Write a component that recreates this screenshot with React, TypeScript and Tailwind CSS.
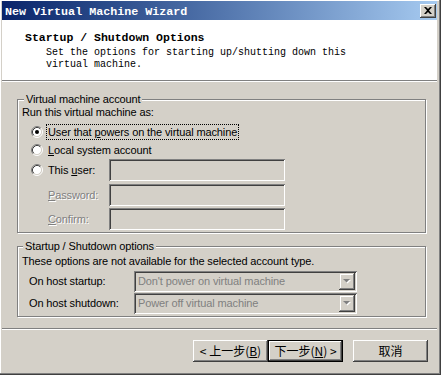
import React from "react";

const sans = { fontFamily: '"Liberation Sans", Arial, sans-serif', letterSpacing: "-0.12px" };
const mono = { fontFamily: '"Liberation Mono", "Courier New", monospace' };
const cjk = { fontFamily: '"Noto Sans CJK SC", "Liberation Sans", sans-serif' };

function Radio({ checked }: { checked?: boolean }) {
  return (
    <svg width="12" height="12" viewBox="0 0 12 12" className="shrink-0">
      <circle cx="6" cy="6" r="4.5" fill="#ffffff" />
      <path d="M2.11 9.89 A5.5 5.5 0 0 1 9.89 2.11" stroke="#808080" strokeWidth="1" fill="none" />
      <path d="M9.89 2.11 A5.5 5.5 0 0 1 2.11 9.89" stroke="#ffffff" strokeWidth="1" fill="none" />
      <path d="M2.82 9.18 A4.5 4.5 0 0 1 9.18 2.82" stroke="#404040" strokeWidth="1" fill="none" />
      <path d="M9.18 2.82 A4.5 4.5 0 0 1 2.82 9.18" stroke="#d4d0c8" strokeWidth="1" fill="none" />
      {checked && <circle cx="6" cy="6" r="2" fill="#000000" />}
    </svg>
  );
}

function Edit() {
  return (
    <div className="w-[176px] h-[22px] bg-[#d4d0c8] shadow-[inset_1px_1px_#808080,inset_-1px_-1px_#ffffff,inset_2px_2px_#404040,inset_-2px_-2px_#d4d0c8]" />
  );
}

function Combo({ text }: { text: string }) {
  return (
    <div className="w-[223px] h-[21px] bg-[#d4d0c8] flex items-center p-[2px] shadow-[inset_1px_1px_#808080,inset_-1px_-1px_#ffffff,inset_2px_2px_#404040,inset_-2px_-2px_#d4d0c8]">
      <div className="flex-1 pl-[2px] text-[11px] leading-[13px] text-[#808080] whitespace-nowrap overflow-hidden" style={sans}>
        {text}
      </div>
      <div className="w-[16px] h-[17px] flex items-center justify-center bg-[#d4d0c8] shadow-[inset_-1px_-1px_#404040,inset_1px_1px_#d4d0c8,inset_-2px_-2px_#808080,inset_2px_2px_#ffffff]">
        <svg width="8" height="6" viewBox="0 0 8 6">
          <path d="M1 1 L8 1 L4.5 4.5 Z" fill="#ffffff" />
          <path d="M0 0 L7 0 L3.5 3.5 Z" fill="#808080" />
        </svg>
      </div>
    </div>
  );
}

function Button({ children, isDefault }: { children: React.ReactNode; isDefault?: boolean }) {
  return (
    <div className={isDefault ? "w-[75px] h-[22px] border border-black" : "w-[75px] h-[22px]"}>
      <div
        className="w-full h-full flex items-center justify-center text-[12px] leading-[14px] text-black bg-[#d4d0c8] shadow-[inset_-1px_-1px_#404040,inset_1px_1px_#ffffff,inset_-2px_-2px_#808080,inset_2px_2px_#d4d0c8]"
        style={cjk}
      >
        <span className="whitespace-pre">{children}</span>
      </div>
    </div>
  );
}

export default function App() {
  return (
    <div
      className="w-[441px] h-[375px] bg-[#d4d0c8] flex flex-col pt-[1px] pl-[2px] pr-[4px] pb-[3px] shadow-[inset_-1px_-1px_#404040,inset_-2px_-2px_#808080,inset_1px_1px_#ffffff]"
    >
      {/* Title bar */}
      <div className="h-[19px] shrink-0 bg-gradient-to-r from-[#0a246a] to-[#a6caf0] flex items-center justify-between pl-[3px] pr-[1px]">
        <div className="text-white font-bold text-[11.7px] leading-[14px] pt-[3px] whitespace-nowrap" style={mono}>
          New Virtual Machine Wizard
        </div>
        <div className="w-[16px] h-[14px] bg-[#d4d0c8] flex items-center justify-center shadow-[inset_-1px_-1px_#404040,inset_1px_1px_#ffffff,inset_-2px_-2px_#808080,inset_2px_2px_#d4d0c8]">
          <svg width="8" height="7" viewBox="0 0 8 7">
            <path d="M0 0 H2 L4 2 L6 0 H8 L5 3.5 L8 7 H6 L4 5 L2 7 H0 L3 3.5 Z" fill="#000000" />
          </svg>
        </div>
      </div>

      {/* Header */}
      <div className="h-[60px] shrink-0 bg-white pt-[11px] pl-[23px]">
        <div className="font-bold text-[11.5px] leading-[14px] text-black whitespace-nowrap" style={mono}>
          Startup / Shutdown Options
        </div>
        <div className="mt-[2px] pl-[21px] text-[10px] leading-[12px] text-black" style={mono}>
          <div className="whitespace-nowrap">Set the options for starting up/shutting down this</div>
          <div className="whitespace-nowrap">virtual machine.</div>
        </div>
      </div>
      <div className="h-[2px] shrink-0 border-t border-[#808080] border-b border-b-white" />

      {/* Main */}
      <div className="h-[246px] shrink-0 pl-[15px] pr-[11px] pt-[17px] text-[11px] leading-[13px] text-black" style={sans}>
        {/* Group 1 */}
        <div className="relative h-[134px] border border-[#808080] shadow-[inset_1px_1px_#ffffff,1px_1px_#ffffff] pl-[4px] pt-[6px]">
          <div className="absolute -top-[7px] left-[6px] px-[2px] bg-[#d4d0c8] whitespace-nowrap">Virtual machine account</div>
          <div className="whitespace-nowrap">Run this virtual machine as:</div>
          <div className="mt-[5px] h-[16px] flex items-center pl-[9px]">
            <Radio checked />
            <div className="ml-[3px] px-[1px] h-[16px] flex items-center border border-dotted border-black whitespace-nowrap">
              <span>
                User that <u>p</u>owers on the virtual machine
              </span>
            </div>
          </div>
          <div className="mt-[2px] h-[16px] flex items-center pl-[9px]">
            <Radio />
            <div className="ml-[4px] px-[1px] whitespace-nowrap">
              <u>L</u>ocal system account
            </div>
          </div>
          <div className="mt-[1px] h-[22px] flex items-center pl-[9px]">
            <Radio />
            <div className="ml-[4px] px-[1px] w-[62px] whitespace-nowrap">
              This <u>u</u>ser:
            </div>
            <Edit />
          </div>
          <div className="mt-[3px] h-[22px] flex items-center pl-[9px]">
            <div className="ml-[16px] px-[1px] w-[62px] whitespace-nowrap text-[#808080] [text-shadow:1px_1px_0_#ffffff]">
              <u>P</u>assword:
            </div>
            <Edit />
          </div>
          <div className="mt-[2px] h-[22px] flex items-center pl-[9px]">
            <div className="ml-[16px] px-[1px] w-[62px] whitespace-nowrap text-[#808080] [text-shadow:1px_1px_0_#ffffff]">
              <u>C</u>onfirm:
            </div>
            <Edit />
          </div>
        </div>

        {/* Group 2 */}
        <div className="relative mt-[13px] h-[71px] border border-[#808080] shadow-[inset_1px_1px_#ffffff,1px_1px_#ffffff] pl-[4px] pt-[8px]">
          <div className="absolute -top-[7px] left-[5px] px-[2px] bg-[#d4d0c8] whitespace-nowrap">Startup / Shutdown options</div>
          <div className="whitespace-nowrap">These options are not available for the selected account type.</div>
          <div className="mt-[3px] h-[21px] flex items-center pl-[7px]">
            <div className="w-[105px] whitespace-nowrap">On host startup:</div>
            <Combo text="Don't power on virtual machine" />
          </div>
          <div className="mt-[1px] h-[21px] flex items-center pl-[7px]">
            <div className="w-[105px] whitespace-nowrap">On host shutdown:</div>
            <Combo text="Power off virtual machine" />
          </div>
        </div>
      </div>

      <div className="h-[2px] shrink-0 border-t border-[#808080] border-b border-b-white" />

      {/* Buttons */}
      <div className="flex-1 flex items-start pt-[10px] pl-[191px]">
        <Button>
          {"< 上一步("}
          <u>B</u>
          {")"}
        </Button>
        <Button isDefault>
          {"下一步("}
          <u>N</u>
          {") >"}
        </Button>
        <div className="ml-[10px]">
          <Button>取消</Button>
        </div>
      </div>
    </div>
  );
}
